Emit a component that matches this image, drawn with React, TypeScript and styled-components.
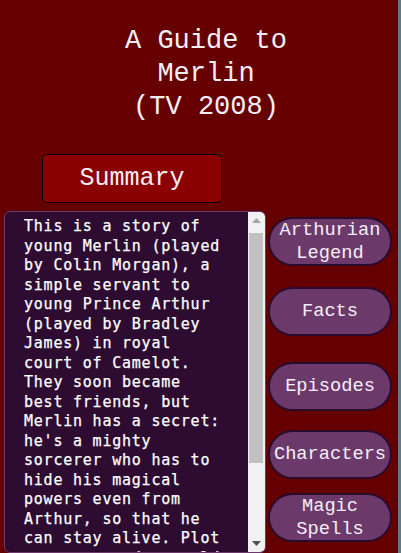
import React from "react";
import styled, { createGlobalStyle } from "styled-components";

const GlobalStyle = createGlobalStyle`
  html, body {
    margin: 0;
    padding: 0;
    background: #5f7a86;
  }
  * { box-sizing: border-box; }
`;

const Page = styled.div`
  width: 398px;
  height: 553px;
  overflow: hidden;
  background: #660000;
`;

const Title = styled.h1`
  margin: 0;
  padding: 25px 0 0 14px;
  text-align: center;
  font-family: "Liberation Mono", "Courier New", monospace;
  font-weight: normal;
  font-size: 27px;
  line-height: 33px;
  color: #f6eef6;
`;

const SummaryButton = styled.button`
  display: block;
  margin: 30px 0 0 42px;
  width: 180px;
  height: 49px;
  padding: 0;
  background: #8b0000;
  border: 1px solid #000;
  border-radius: 5px;
  font-family: "Liberation Mono", "Courier New", monospace;
  font-size: 25px;
  color: #f6eef6;
  cursor: pointer;
`;

const ContentRow = styled.div`
  display: flex;
  align-items: flex-start;
  gap: 2px;
  margin-top: 8px;
  padding-left: 4px;
`;

const TextPanel = styled.div`
  display: flex;
  width: 262px;
  height: 342px;
  flex: none;
  background: #2e0c31;
  border: 1px solid #6b3a6b;
  border-radius: 6px;
  overflow: hidden;
`;

const TextScroll = styled.div`
  flex: 1;
  min-width: 0;
  overflow: hidden;
  padding: 5px 24px 6px 19px;
  font-family: "DejaVu Sans Mono", "Lucida Console", monospace;
  font-size: 15px;
  letter-spacing: 0.77px;
  line-height: 19.5px;
  color: #ffffff;
  -webkit-text-stroke: 0.25px #ffffff;
`;

const Paragraph = styled.p`
  margin: 0;
`;

const ScrollBar = styled.div`
  flex: none;
  width: 17px;
  display: flex;
  flex-direction: column;
  background: #f1f1f1;
`;

const ScrollArrow = styled.div`
  flex: none;
  height: 17px;
  display: flex;
  align-items: center;
  justify-content: center;
`;

const ScrollTrack = styled.div`
  flex: 1;
  padding: 4px 2px 0 1px;
`;

const ScrollThumb = styled.div`
  height: 230px;
  background: #c1c1c1;
`;

const Nav = styled.nav`
  display: flex;
  flex-direction: column;
  width: 124px;
`;

const NavButton = styled.button<{ $top: number }>`
  margin-top: ${(p) => p.$top}px;
  width: 124px;
  height: 49px;
  padding: 0;
  background: #6b3a6b;
  border: 2px solid #2a0b2e;
  border-radius: 25px;
  font-family: "Liberation Mono", "Courier New", monospace;
  font-size: 18.7px;
  line-height: 22.5px;
  color: #f6eef6;
  cursor: pointer;
`;

const navItems: { label: React.ReactNode; top: number }[] = [
  { label: <>Arthurian<br />Legend</>, top: 6 },
  { label: "Facts", top: 21 },
  { label: "Episodes", top: 26 },
  { label: "Characters", top: 19 },
  { label: <>Magic<br />Spells</>, top: 14 },
];

function Arrow({ up, color }: { up?: boolean; color: string }) {
  return (
    <svg width="9" height="5" viewBox="0 0 9 5">
      {up ? (
        <polygon points="0,5 9,5 4.5,0" fill={color} />
      ) : (
        <polygon points="0,0 9,0 4.5,5" fill={color} />
      )}
    </svg>
  );
}

export default function App() {
  return (
    <>
      <GlobalStyle />
      <Page>
        <Title>
          A Guide to
          <br />
          Merlin
          <br />
          (TV 2008)
        </Title>
        <SummaryButton>Summary</SummaryButton>
        <ContentRow>
          <TextPanel>
            <TextScroll>
              <Paragraph>
                This is a story of young Merlin (played by Colin Morgan), a
                simple servant to young Prince Arthur (played by Bradley James)
                in royal court of Camelot. They soon became best friends, but
                Merlin has a secret: he's a mighty sorcerer who has to hide his
                magical powers even from Arthur, so that he can stay alive. Plot
                moves around a world of magic, dragons and old legends, where
                every choice counts.
              </Paragraph>
            </TextScroll>
            <ScrollBar>
              <ScrollArrow>
                <Arrow up color="#a3a3a3" />
              </ScrollArrow>
              <ScrollTrack>
                <ScrollThumb />
              </ScrollTrack>
              <ScrollArrow>
                <Arrow color="#505050" />
              </ScrollArrow>
            </ScrollBar>
          </TextPanel>
          <Nav>
            {navItems.map((item, i) => (
              <NavButton key={i} $top={item.top}>
                {item.label}
              </NavButton>
            ))}
          </Nav>
        </ContentRow>
      </Page>
    </>
  );
}
